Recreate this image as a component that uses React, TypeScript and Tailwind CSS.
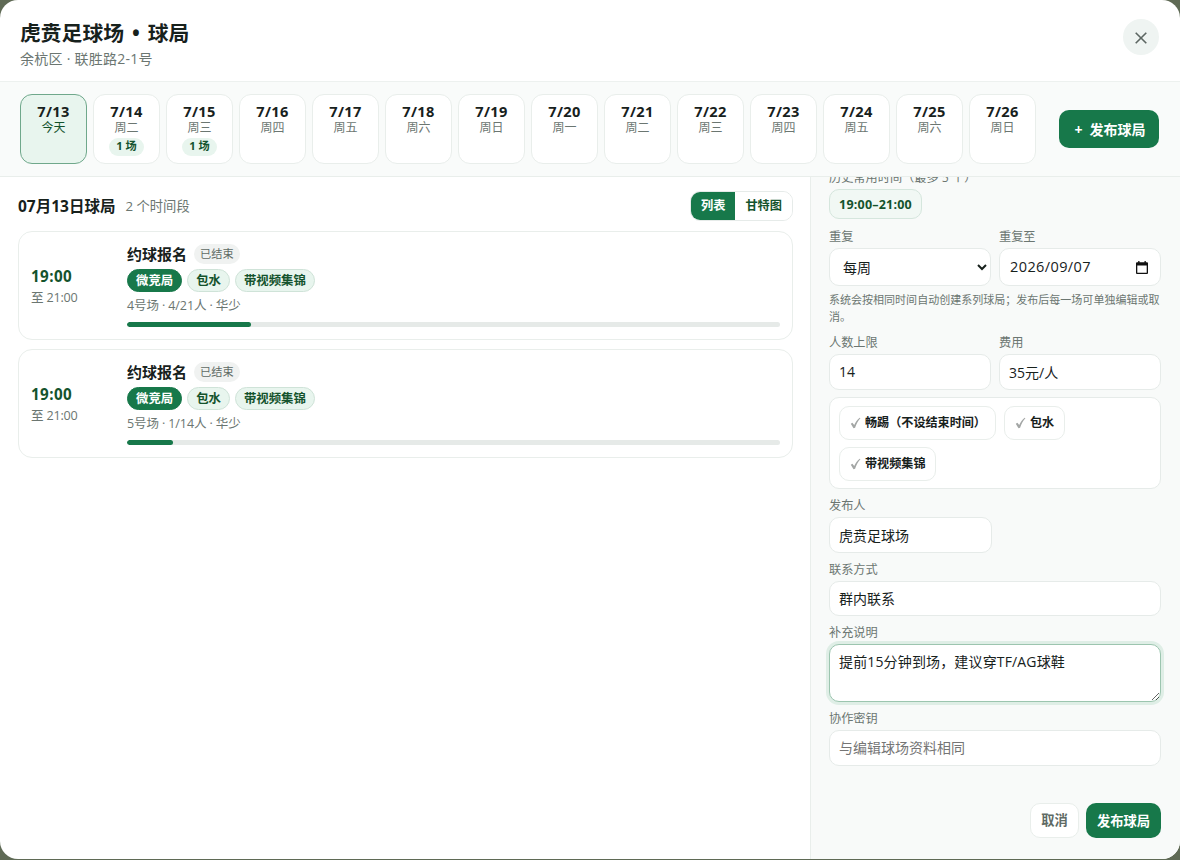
import { useState } from "react";
import type { ReactNode } from "react";
import clsx from "clsx";

interface Day {
  date: string;
  week: string;
  count?: number;
}

interface Match {
  id: string;
  start: string;
  end: string;
  title: string;
  status: string;
  tags: string[];
  info: string;
  joined: number;
}

const days: Day[] = [
  { date: "7/13", week: "今天" },
  { date: "7/14", week: "周二", count: 1 },
  { date: "7/15", week: "周三", count: 1 },
  { date: "7/16", week: "周四" },
  { date: "7/17", week: "周五" },
  { date: "7/18", week: "周六" },
  { date: "7/19", week: "周日" },
  { date: "7/20", week: "周一" },
  { date: "7/21", week: "周二" },
  { date: "7/22", week: "周三" },
  { date: "7/23", week: "周四" },
  { date: "7/24", week: "周五" },
  { date: "7/25", week: "周六" },
  { date: "7/26", week: "周日" },
];

const matches: Match[] = [
  {
    id: "m1",
    start: "19:00",
    end: "21:00",
    title: "约球报名",
    status: "已结束",
    tags: ["微竞局", "包水", "带视频集锦"],
    info: "4号场 · 4/21人 · 华少",
    joined: 19,
  },
  {
    id: "m2",
    start: "19:00",
    end: "21:00",
    title: "约球报名",
    status: "已结束",
    tags: ["微竞局", "包水", "带视频集锦"],
    info: "5号场 · 1/14人 · 华少",
    joined: 7,
  },
];

const inputClass =
  "block w-full h-[35.5px] rounded-[10px] border border-[#e6ebe9] bg-white px-[9px] text-sm text-[#17211c] outline-none placeholder:text-[#757575]";

function Field({ label, children }: { label: string; children: ReactNode }) {
  return (
    <label className="flex min-w-0 flex-col gap-[3px]">
      <span className="h-[17px] pt-[1px] text-[12.2px] leading-4 text-[#6b7671]">
        {label}
      </span>
      {children}
    </label>
  );
}

function OptionChip({ text, wide }: { text: string; wide?: boolean }) {
  return (
    <button
      className={clsx(
        "flex h-[34px] items-center gap-1 rounded-[10px] border border-[#e9eeeb] bg-white pl-[10px] text-[12.1px] font-bold text-[#17211c]",
        wide ? "w-[157px]" : "pr-[10px]"
      )}
    >
      <svg width="11" height="12" viewBox="0 0 10 12">
        <path
          d="M.3 6.800 1.900 5.700 3.700 8C5 5 6.800 2.400 9.200.7L9.900 1.300C7.500 4 5.900 7 4.600 10.800L3 11.200z"
          fill="#a3a6a5"
        />
      </svg>
      <span className="whitespace-nowrap">{text}</span>
    </button>
  );
}

function MatchCard({ match }: { match: Match }) {
  return (
    <div className="flex h-[109px] items-center rounded-[14px] border border-[#e9eeeb] bg-white px-3">
      <div className="w-24 shrink-0 pt-[2px]">
        <div className="text-[15.2px] leading-5 font-bold tracking-[0.4px] text-[#14532d]">
          {match.start}
        </div>
        <div className="mt-[2px] text-[12.6px] leading-5 tracking-[-0.2px] text-[#6b7671]">
          至 {match.end}
        </div>
      </div>
      <div className="min-w-0 flex-1">
        <div className="flex h-5 items-center gap-[7px]">
          <span className="text-[15px] font-bold text-[#17211c]">
            {match.title}
          </span>
          <span className="flex h-5 items-center rounded-full bg-[#f0f2f1] px-[6px] text-[11.2px] text-[#5f6b65]">
            {match.status}
          </span>
        </div>
        <div className="mt-[5px] flex gap-[5px]">
          {match.tags.map((tag, index) => (
            <span
              key={tag}
              className={clsx(
                "flex h-[23px] items-center rounded-full border px-2 pt-[1px] text-[12.4px] font-bold",
                index === 0
                  ? "border-[#17784a] bg-[#17784a] text-white"
                  : "border-[#cfe3d8] bg-[#e8f5ee] text-[#14532d]"
              )}
            >
              {tag}
            </span>
          ))}
        </div>
        <div className="mt-[6px] h-4 text-[12.5px] leading-4 tracking-[-0.1px] text-[#6b7671]">
          {match.info}
        </div>
        <div className="mt-[8px] h-[5px] overflow-hidden rounded-full bg-[#e6eae8]">
          <div
            className="h-full rounded-full bg-[#17784a]"
            style={{ width: `${match.joined}%` }}
          />
        </div>
      </div>
    </div>
  );
}

export default function App() {
  const [activeDay, setActiveDay] = useState<string>("7/13");
  const [view, setView] = useState<string>("列表");
  const [note, setNote] = useState<string>(
    "提前15分钟到场，建议穿TF/AG球鞋"
  );

  return (
    <div className="h-[860px] w-[1180px] overflow-hidden bg-[#5f6a55] font-['Open_Sans','Noto_Sans_CJK_SC',sans-serif]">
      <div className="flex h-[859px] flex-col overflow-hidden rounded-[18px] bg-white">
        <header className="flex h-[82px] shrink-0 items-start justify-between border-b border-[#edf1ef] pr-[21px] pl-5">
          <div className="pt-[18px]">
            <h1 className="text-[20.8px] leading-[30px] font-bold text-[#17211c]">
              虎贲足球场<span className="mx-[8px]">•</span>球局
            </h1>
            <p className="text-[14px] leading-[22px] tracking-[0.25px] text-[#6b7671]">
              余杭区 · 联胜路2-1号
            </p>
          </div>
          <button className="mt-[19px] flex size-9 items-center justify-center rounded-full bg-[#eff4f2]">
            <svg
              className="mt-[2px]"
              width="12"
              height="12"
              viewBox="0 0 12 12"
              stroke="#5c6662"
              strokeWidth="1.6"
            >
              <path d="M.7.7l10.6 10.6M11.3.7.7 11.3" />
            </svg>
          </button>
        </header>

        <div className="flex h-[95px] shrink-0 items-center justify-between border-b border-[#e9eeeb] bg-[#f9fbfa] pr-[21px] pb-[1px] pl-5">
          <div className="flex gap-[6px]">
            {days.map((day) => (
              <button
                key={day.date}
                onClick={() => setActiveDay(day.date)}
                className={clsx(
                  "flex h-[70px] w-[67px] flex-col items-center rounded-xl border pt-[7px]",
                  activeDay === day.date
                    ? "border-[#6fa88b] bg-[#e8f5ee]"
                    : "border-[#e9eeeb] bg-white"
                )}
              >
                <span className="text-[14.6px] leading-[18px] font-bold tracking-[0.35px] text-[#17211c]">
                  {day.date}
                </span>
                <span
                  className={clsx(
                    "text-xs leading-4",
                    activeDay === day.date ? "text-[#14532d]" : "text-[#6b7671]"
                  )}
                >
                  {day.week}
                </span>
                {day.count && (
                  <span className="mt-[2px] flex h-[18px] items-center rounded-full bg-[#e8f5ee] px-[7px] text-[11.2px] font-bold text-[#14532d]">
                    {day.count} 场
                  </span>
                )}
              </button>
            ))}
          </div>
          <button className="mt-[1px] flex h-[38px] w-[100px] items-center justify-center rounded-[10px] bg-[#17784a] pl-[2px] text-[14px] font-bold text-white">
            <span className="mr-[7px]">+</span>发布球局
          </button>
        </div>

        <div className="flex min-h-0 flex-1">
          <main className="w-[810px] shrink-0 pt-[14px] pr-[17px] pl-[18px]">
            <div className="flex h-[30px] items-center justify-between">
              <div className="flex items-center">
                <h2 className="pt-[1px] text-[15.5px] font-bold text-[#17211c]">
                  07月13日球局
                </h2>
                <span className="ml-[10px] pt-[2px] text-[13.3px] text-[#6b7671]">
                  2 个时间段
                </span>
              </div>
              <div className="flex h-[30px] overflow-hidden rounded-[10px] border border-[#e6ebe9]">
                {["列表", "甘特图"].map((name) => (
                  <button
                    key={name}
                    onClick={() => setView(name)}
                    className={clsx(
                      "px-[10px] pt-[1px] text-[12.2px] font-bold",
                      view === name
                        ? "bg-[#17784a] text-white"
                        : "bg-white text-[#14532d]"
                    )}
                  >
                    {name}
                  </button>
                ))}
              </div>
            </div>
            <div className="mt-[10px] flex flex-col gap-[9px]">
              {matches.map((match) => (
                <MatchCard key={match.id} match={match} />
              ))}
            </div>
          </main>

          <aside className="flex min-w-0 flex-1 flex-col overflow-hidden border-l border-[#e9eeeb] bg-[#f8faf9] pr-[19px] pl-[18px]">
            {/* the form is scrolled, so its first label is cut by the day bar */}
            <div className="-mt-2 flex flex-col">
              <Field label="历史常用时间（最多 5 个）">
                <button className="flex h-[30px] w-[93px] items-center justify-center rounded-[10px] border border-[#d5e6dd] bg-[#f1f8f4] pt-[2px] text-[12.5px] font-bold tracking-[0.2px] text-[#14532d]">
                  19:00–21:00
                </button>
              </Field>
              <div className="mt-[9px] grid grid-cols-2 gap-2">
                <Field label="重复">
                  <select className="block h-[38px] w-full rounded-[10px] border border-[#e6ebe9] bg-white px-[9px] text-sm text-[#17211c] outline-none">
                    <option>每周</option>
                    <option>不重复</option>
                  </select>
                </Field>
                <Field label="重复至">
                  <div className="flex h-[38px] items-center justify-between rounded-[10px] border border-[#e6ebe9] bg-white pr-3 pl-[10px] text-[#17211c]">
                    <span className="text-[14.5px] tracking-[0.4px]">
                      2026/09/07
                    </span>
                    <svg width="12" height="13" viewBox="0 0 12 13">
                      <path
                        fill="#111"
                        fillRule="evenodd"
                        d="M2.2 0h1.3v1.3h5V0h1.3v1.3H11a1 1 0 0 1 1 1V12a1 1 0 0 1-1 1H1a1 1 0 0 1-1-1V2.300a1 1 0 0 1 1-1h1.200zM1.300 4.600v7.100h9.400V4.600z"
                      />
                    </svg>
                  </div>
                </Field>
              </div>
              <p className="mt-[6px] text-[11.03px] leading-[16.5px] text-[#6b7671]">
                系统会按相同时间自动创建系列球局；发布后每一场可单独编辑或取消。
              </p>
              <div className="mt-[9px] grid grid-cols-2 gap-2">
                <Field label="人数上限">
                  <input className={inputClass} defaultValue="14" />
                </Field>
                <Field label="费用">
                  <input className={inputClass} defaultValue="35元/人" />
                </Field>
              </div>
              <div className="mt-[7.5px] flex h-[92px] flex-wrap content-start gap-x-2 gap-y-[7px] rounded-[10px] border border-[#e6ebe9] bg-white py-2 pl-[9px]">
                <OptionChip text="畅踢（不设结束时间）" wide />
                <OptionChip text="包水" />
                <OptionChip text="带视频集锦" />
              </div>
              <div className="mt-2 flex flex-col gap-2">
                <div className="w-[163px]">
                  <Field label="发布人">
                    <input className={inputClass} defaultValue="虎贲足球场" />
                  </Field>
                </div>
                <Field label="联系方式">
                  <input className={inputClass} defaultValue="群内联系" />
                </Field>
                <Field label="补充说明">
                  <textarea
                    value={note}
                    onChange={(e) => setNote(e.target.value)}
                    className="block h-[58px] w-full resize rounded-[10px] border border-[#9cc5af] bg-white px-[9px] py-[7px] text-sm leading-[19px] tracking-[0.15px] text-[#17211c] shadow-[0_0_0_3px_#dfeee6] outline-none"
                  />
                </Field>
                <Field label="协作密钥">
                  <input
                    className={inputClass}
                    placeholder="与编辑球场资料相同"
                  />
                </Field>
              </div>
            </div>
            <div className="mt-auto mb-[21px] flex justify-end gap-[7px]">
              <button className="h-[35px] w-[49px] rounded-[10px] border border-[#e9eeeb] bg-white pt-[1px] text-[13.3px] font-bold text-[#5f6b65]">
                取消
              </button>
              <button className="h-[35px] w-[75px] rounded-[10px] bg-[#17784a] pt-[2px] text-[13.3px] font-bold text-white">
                发布球局
              </button>
            </div>
          </aside>
        </div>
      </div>
    </div>
  );
}
